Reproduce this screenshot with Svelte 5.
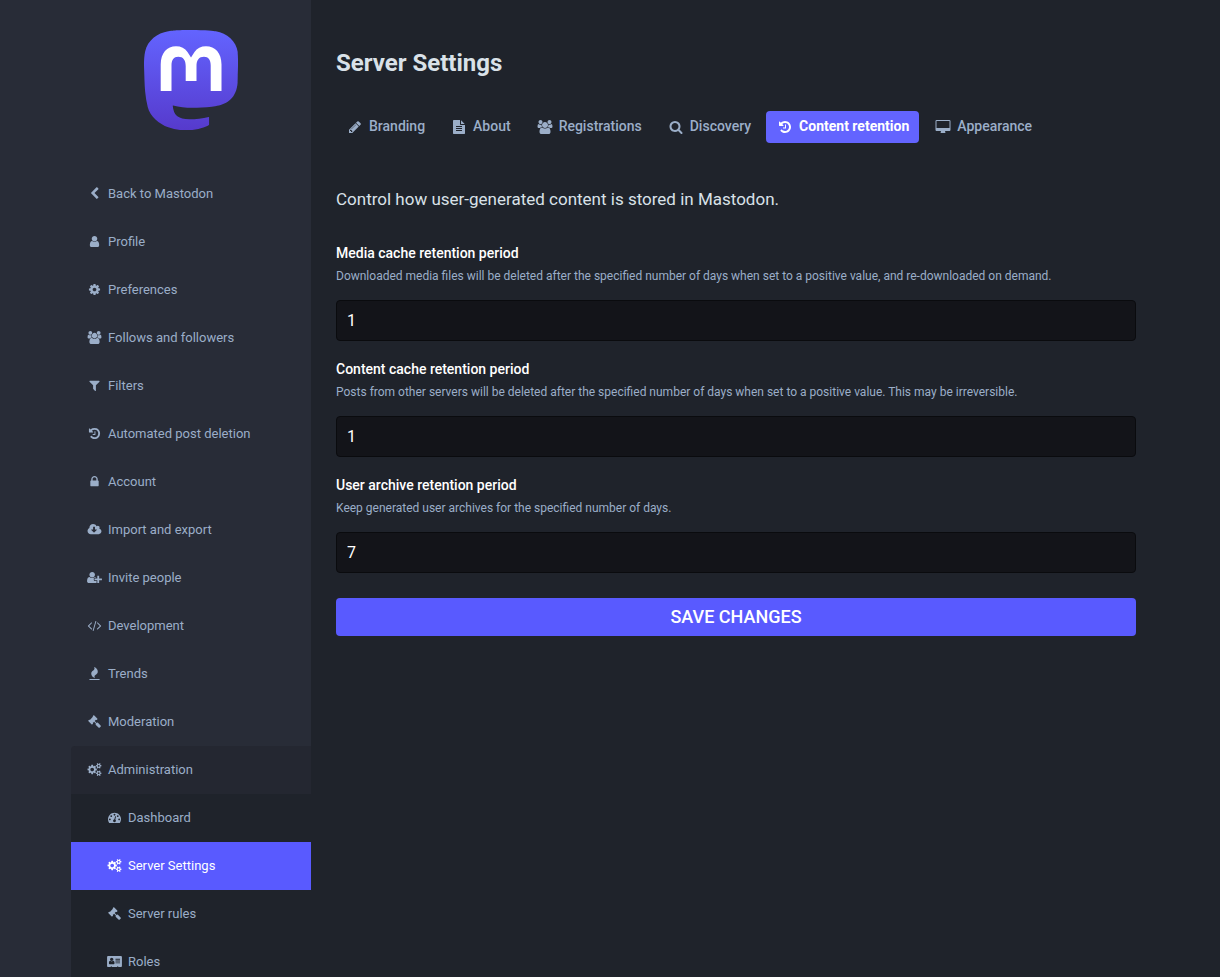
<script>
  const glyphs = {
    back: { box: '0 0 1792 1792', d: 'M1427 301l-531 531 531 531q19 19 19 45t-19 45l-166 166q-19 19-45 19t-45-19l-742-742q-19-19-19-45t19-45l742-742q19-19 45-19t45 19l166 166q19 19 19 45t-19 45z' },
    user: { box: '0 0 1792 1792', d: 'M1536 1399q0 109-62.5 187t-150.5 78h-854q-88 0-150.5-78t-62.5-187q0-85 8.5-160.5t31.5-152 58.5-131 94-89 134.5-34.5q131 128 313 128t313-128q76 0 134.5 34.5t94 89 58.5 131 31.5 152 8.5 160.5zm-256-887q0 159-112.5 271.5t-271.5 112.5-271.5-112.5-112.5-271.5 112.5-271.5 271.5-112.5 271.5 112.5 112.5 271.5z' },
    cog: { box: '0 0 1792 1792', d: 'M1152 896q0-106-75-181t-181-75-181 75-75 181 75 181 181 75 181-75 75-181zm512-109v222q0 12-8 23t-20 13l-185 28q-19 54-39 91 35 50 107 138 10 12 10 25t-9 23q-27 37-99 108t-94 71q-12 0-26-9l-138-108q-44 23-91 38-16 136-29 186-7 28-36 28h-222q-14 0-24.5-8.5t-11.5-21.5l-28-184q-49-16-90-37l-141 107q-10 9-25 9-14 0-25-11-126-114-165-168-7-10-7-23 0-12 8-23 15-21 51-66.5t54-70.5q-27-50-41-99l-183-27q-13-2-21-12.5t-8-23.5v-222q0-12 8-23t19-13l186-28q14-46 39-92-40-57-107-138-10-12-10-24 0-10 9-23 26-36 98.5-107.5t94.5-71.5q13 0 26 10l138 107q44-23 91-38 16-136 29-186 7-28 36-28h222q14 0 24.5 8.5t11.5 21.5l28 184q49 16 90 37l142-107q9-9 24-9 13 0 25 10 129 119 165 170 7 8 7 22 0 12-8 23-15 21-51 66.5t-54 70.5q26 50 41 98l183 28q13 2 21 12.5t8 23.5z' },
    users: { box: '0 0 2048 1792', d: 'M657 896q-162 5-265 128h-134q-82 0-138-40.5t-56-118.5q0-353 124-353 6 0 43.5 21t97.5 42.5 119 21.5q67 0 133-23-5 37-5 66 0 139 81 256zm1071 637q0 120-73 189.5t-194 69.5h-874q-121 0-194-69.5t-73-189.5q0-53 3.5-103.5t14-109 26.5-108.5 43-97.5 62-81 85.5-53.5 111.5-20q10 0 43 21.5t73 48 107 48 135 21.5 135-21.5 107-48 73-48 43-21.5q61 0 111.5 20t85.5 53.5 62 81 43 97.5 26.5 108.5 14 109 3.5 103.5zm-1024-1277q0 106-75 181t-181 75-181-75-75-181 75-181 181-75 181 75 75 181zm704 384q0 159-112.5 271.5t-271.5 112.5-271.5-112.5-112.5-271.5 112.5-271.5 271.5-112.5 271.5 112.5 112.5 271.5zm576 225q0 78-56 118.5t-138 40.5h-134q-103-123-265-128 81-117 81-256 0-29-5-66 66 23 133 23 59 0 119-21.5t97.5-42.5 43.5-21q124 0 124 353zm-128-609q0 106-75 181t-181 75-181-75-75-181 75-181 181-75 181 75 75 181z' },
    filter: { box: '0 0 1792 1792', d: 'M1595 295q17 41-14 70l-493 493v742q0 42-39 59-13 5-25 5-27 0-45-19l-256-256q-19-19-19-45v-486l-493-493q-31-29-14-70 17-39 59-39h1280q42 0 59 39z' },
    history: { box: '0 0 1792 1792', d: 'M1664 896q0 156-61 298t-164 245-245 164-298 61q-172 0-327-72.5t-264-204.5q-7-10-6.5-22.5t8.5-20.5l137-138q10-9 25-9 16 2 23 12 73 95 179 147t225 52q104 0 198.5-40.5t163.5-109.5 109.5-163.5 40.5-198.5-40.5-198.5-109.5-163.5-163.5-109.5-198.5-40.5q-98 0-188 35.5t-160 101.5l137 138q31 30 14 69-17 40-59 40h-448q-26 0-45-19t-19-45v-448q0-42 40-59 39-17 69 14l130 129q107-101 244.5-156.5t284.5-55.5q156 0 298 61t245 164 164 245 61 298zm-640-288v448q0 14-9 23t-23 9h-320q-14 0-23-9t-9-23v-64q0-14 9-23t23-9h224v-352q0-14 9-23t23-9h64q14 0 23 9t9 23z' },
    lock: { box: '0 0 1792 1792', d: 'M640 768h512v-192q0-106-75-181t-181-75-181 75-75 181v192zm832 96v576q0 40-28 68t-68 28h-960q-40 0-68-28t-28-68v-576q0-40 28-68t68-28h32v-192q0-184 132-316t316-132 316 132 132 316v192h32q40 0 68 28t28 68z' },
    cloud: { box: '0 0 2048 1792', d: 'M1344 928q0-14-9-23t-23-9h-224v-352q0-13-9.5-22.5t-22.5-9.5h-192q-13 0-22.5 9.5t-9.5 22.5v352h-224q-13 0-22.5 9.5t-9.5 22.5q0 14 9 23l352 352q9 9 23 9t23-9l351-351q10-12 10-24zm640 224q0 159-112.5 271.5t-271.5 112.5h-1088q-185 0-316.5-131.5t-131.5-316.5q0-130 70-240t188-165q-2-30-2-43 0-212 150-362t362-150q156 0 285.5 87t188.5 231q71-62 166-62 106 0 181 75t75 181q0 76-41 138 130 31 213.5 135.5t83.5 238.5z' },
    invite: { box: '0 0 2048 1792', d: 'M704 896q-159 0-271.5-112.5t-112.5-271.5 112.5-271.5 271.5-112.5 271.5 112.5 112.5 271.5-112.5 271.5-271.5 112.5zm960 128h352q13 0 22.5 9.5t9.5 22.5v192q0 13-9.5 22.5t-22.5 9.5h-352v352q0 13-9.5 22.5t-22.5 9.5h-192q-13 0-22.5-9.5t-9.5-22.5v-352h-352q-13 0-22.5-9.5t-9.5-22.5v-192q0-13 9.5-22.5t22.5-9.5h352v-352q0-13 9.5-22.5t22.5-9.5h192q13 0 22.5 9.5t9.5 22.5v352zm-736 224q0 52 38 90t90 38h256v238q-68 50-171 50h-874q-121 0-194-69t-73-190q0-53 3.5-103.5t14-109 26.5-108.5 43-97.5 62-81 85.5-53.5 111.5-20q19 0 39 17 79 61 154.5 91.5t164.5 30.5 164.5-30.5 154.5-91.5q20-17 39-17 132 0 217 96h-223q-52 0-90 38t-38 90v192z' },
    code: { box: '0 0 2048 1792', d: 'M681 1399l-50 50q-10 10-23 10t-23-10l-466-466q-10-10-10-23t10-23l466-466q10-10 23-10t23 10l50 50q10 10 10 23t-10 23l-393 393 393 393q10 10 10 23t-10 23zm591-1067l-373 1291q-4 13-15.5 19.5t-23.5 2.5l-62-17q-13-4-19.5-15.5t-2.5-24.5l373-1291q4-13 15.5-19.5t23.5-2.5l62 17q13 4 19.5 15.5t2.5 24.5zm657 651l-466 466q-10 10-23 10t-23-10l-50-50q-10-10-10-23t10-23l393-393-393-393q-10-10-10-23t10-23l50-50q10-10 23-10t23 10l466 466q10 10 10 23t-10 23z' },
    fire: { box: '0 0 1792 1792', d: 'M1600 1696v64q0 13-9.5 22.5t-22.5 9.5h-1344q-13 0-22.5-9.5t-9.5-22.5v-64q0-13 9.5-22.5t22.5-9.5h1344q13 0 22.5 9.5t9.5 22.5zm-256-1056q0 78-24.5 144t-64 112.5-87.5 88-96 77.5-87.5 72-64 81.5-24.5 96.5q0 96 67 224l-4-1 1 1q-90-41-160-83t-138.5-100-113.5-122.5-72.5-150.5-27.5-184q0-78 24.5-144t64-112.5 87.5-88 96-77.5 87.5-72 64-81.5 24.5-96.5q0-94-66-224l3 1-1-1q90 41 160 83t138.5 100 113.5 122.5 72.5 150.5 27.5 184z' },
    gavel: { box: '0 0 1792 1792', d: 'M1771 1536q0 53-37 90l-107 108q-39 37-91 37-53 0-90-37l-363-364q-38-36-38-90 0-53 43-96l-256-256-126 126q-14 14-34 14t-34-14q2 2 12.5 12t12.5 13 10 11.5 10 13.5 6 13.5 5.5 16.5 1.5 18q0 38-28 68-3 3-16.5 18t-19 20.5-18.5 16.5-22 15.5-22 9-26 4.5q-40 0-68-28l-408-408q-28-28-28-68 0-13 4.5-26t9-22 15.5-22 16.5-18.5 20.5-19 18-16.5q30-28 68-28 10 0 18 1.5t16.5 5.5 13.5 6 13.5 10 11.5 10 13 12.5 12 12.5q-14-14-14-34t14-34l348-348q14-14 34-14t34 14q-2-2-12.5-12t-12.5-13-10-11.5-10-13.5-6-13.5-5.5-16.5-1.5-18q0-38 28-68 3-3 16.5-18t19-20.5 18.5-16.5 22-15.5 22-9 26-4.5q40 0 68 28l408 408q28 28 28 68 0 13-4.5 26t-9 22-15.5 22-16.5 18.5-20.5 19-18 16.5q-30 28-68 28-10 0-18-1.5t-16.5-5.5-13.5-6-13.5-10-11.5-10-13-12.5-12-12.5q14 14 14 34t-14 34l-126 126 256 256q43-43 96-43 52 0 91 37l363 363q37 39 37 91z' },
    cogs: { box: '-64 0 1920 1792', d: 'M832 896q0-106-75-181t-181-75-181 75-75 181 75 181 181 75 181-75 75-181zm768 512q0-52-38-90t-90-38-90 38-38 90q0 53 37.5 90.5t90.5 37.5 90.5-37.5 37.5-90.5zm0-1024q0-52-38-90t-90-38-90 38-38 90q0 53 37.5 90.5t90.5 37.5 90.5-37.5 37.5-90.5zm-384 421v185q0 10-7 19.5t-16 10.5l-155 24q-11 35-32 76 34 48 90 115 7 11 7 20 0 12-7 19-23 30-82.5 89.5t-78.5 59.5q-11 0-21-7l-115-90q-37 19-77 31-11 108-23 155-7 24-30 24h-186q-11 0-20-7.5t-10-17.5l-23-153q-34-10-75-31l-118 89q-7 7-20 7-11 0-21-8-144-133-144-160 0-9 7-19 10-14 41-53t47-61q-23-44-35-82l-152-24q-10-1-17-9.5t-7-19.5v-185q0-10 7-19.5t16-10.5l155-24q11-35 32-76-34-48-90-115-7-11-7-20 0-12 7-20 22-30 82-89t79-59q11 0 21 7l115 90q34-18 77-32 11-108 23-154 7-24 30-24h186q11 0 20 7.5t10 17.5l23 153q34 10 75 31l118-89q8-7 20-7 11 0 21 8 144 133 144 160 0 8-7 19-12 16-42 54t-45 60q23 48 34 82l152 23q10 2 17 10.5t7 19.5zm640 533v140q0 16-149 31-12 27-30 52 51 113 51 138 0 4-4 7-122 71-124 71-8 0-46-47t-52-68q-20 2-30 2t-30-2q-14 21-52 68t-46 47q-2 0-124-71-4-3-4-7 0-25 51-138-18-25-30-52-149-15-149-31v-140q0-16 149-31 13-29 30-52-51-113-51-138 0-4 4-7 4-2 35-20t59-34 30-16q8 0 46 46.5t52 67.5q20-2 30-2t30 2q51-71 92-112l6-2q4 0 124 70 4 3 4 7 0 25-51 138 17 23 30 52 149 15 149 31zm0-1024v140q0 16-149 31-12 27-30 52 51 113 51 138 0 4-4 7-122 71-124 71-8 0-46-47t-52-68q-20 2-30 2t-30-2q-14 21-52 68t-46 47q-2 0-124-71-4-3-4-7 0-25 51-138-18-25-30-52-149-15-149-31v-140q0-16 149-31 13-29 30-52-51-113-51-138 0-4 4-7 4-2 35-20t59-34 30-16q8 0 46 46.5t52 67.5q20-2 30-2t30 2q51-71 92-112l6-2q4 0 124 70 4 3 4 7 0 25-51 138 17 23 30 52 149 15 149 31z' },
    gauge: { box: '0 0 1792 1792', d: 'M384 1152q0-53-37.5-90.5t-90.5-37.5-90.5 37.5-37.5 90.5 37.5 90.5 90.5 37.5 90.5-37.5 37.5-90.5zm192-448q0-53-37.5-90.5t-90.5-37.5-90.5 37.5-37.5 90.5 37.5 90.5 90.5 37.5 90.5-37.5 37.5-90.5zm428 481l101-382q6-26-7.5-48.5t-38.5-29.5-48 6.5-30 39.5l-101 382q-60 5-107 43.5t-63 98.5q-20 77 20 146t117 89 146-20 89-117q16-60-6-117t-72-91zm660-33q0-53-37.5-90.5t-90.5-37.5-90.5 37.5-37.5 90.5 37.5 90.5 90.5 37.5 90.5-37.5 37.5-90.5zm-640-640q0-53-37.5-90.5t-90.5-37.5-90.5 37.5-37.5 90.5 37.5 90.5 90.5 37.5 90.5-37.5 37.5-90.5zm448 192q0-53-37.5-90.5t-90.5-37.5-90.5 37.5-37.5 90.5 37.5 90.5 90.5 37.5 90.5-37.5 37.5-90.5zm320 448q0 261-141 483-19 29-54 29h-1402q-35 0-54-29-141-221-141-483 0-182 71-348t191-286 286-191 348-71 348 71 286 191 191 286 71 348z' },
    card: { box: '0 0 2048 1792', d: 'M1024 1131q0-64-9-117.5t-29.5-103-60.5-78-97-28.5q-6 4-30 18t-37.5 21.5-35.5 17.5-43 14.5-42 4.5-42-4.5-43-14.5-35.5-17.5-37.5-21.5-30-18q-57 0-97 28.5t-60.5 78-29.5 103-9 117.5 37 106.5 91 42.5h512q54 0 91-42.5t37-106.5zm-157-520q0-94-66.5-160.5t-160.5-66.5-160.5 66.5-66.5 160.5 66.5 160.5 160.5 66.5 160.5-66.5 66.5-160.5zm925 509v-64q0-14-9-23t-23-9h-576q-14 0-23 9t-9 23v64q0 14 9 23t23 9h576q14 0 23-9t9-23zm0-260v-56q0-15-10.5-25.5t-25.5-10.5h-568q-15 0-25.5 10.5t-10.5 25.5v56q0 15 10.5 25.5t25.5 10.5h568q15 0 25.5-10.5t10.5-25.5zm0-252v-64q0-14-9-23t-23-9h-576q-14 0-23 9t-9 23v64q0 14 9 23t23 9h576q14 0 23-9t9-23zm256-320v1216q0 66-47 113t-113 47h-352v-96q0-14-9-23t-23-9h-64q-14 0-23 9t-9 23v96h-768v-96q0-14-9-23t-23-9h-64q-14 0-23 9t-9 23v96h-352q-66 0-113-47t-47-113v-1216q0-66 47-113t113-47h1728q66 0 113 47t47 113z' },
    pencil: { box: '0 0 1792 1792', d: 'M491 1536l91-91-235-235-91 91v107h128v128h107zm523-928q0-22-22-22-10 0-17 7l-542 542q-7 7-7 17 0 22 22 22 10 0 17-7l542-542q7-7 7-17zm-54-192l416 416-832 832h-416v-416zm683 96q0 53-37 90l-166 166-416-416 166-165q36-38 90-38 53 0 91 38l235 234q37 39 37 91z' },
    file: { box: '0 0 1792 1792', d: 'M1596 476q14 14 28 36h-472v-472q22 14 36 28zm-476 164h544v1056q0 40-28 68t-68 28h-1344q-40 0-68-28t-28-68v-1600q0-40 28-68t68-28h800v544q0 40 28 68t68 28zm160 736v-64q0-14-9-23t-23-9h-704q-14 0-23 9t-9 23v64q0 14 9 23t23 9h704q14 0 23-9t9-23zm0-256v-64q0-14-9-23t-23-9h-704q-14 0-23 9t-9 23v64q0 14 9 23t23 9h704q14 0 23-9t9-23zm0-256v-64q0-14-9-23t-23-9h-704q-14 0-23 9t-9 23v64q0 14 9 23t23 9h704q14 0 23-9t9-23z' },
    search: { box: '0 0 1792 1792', d: 'M1216 832q0-185-131.5-316.5t-316.5-131.5-316.5 131.5-131.5 316.5 131.5 316.5 316.5 131.5 316.5-131.5 131.5-316.5zm512 832q0 52-38 90t-90 38q-54 0-90-38l-343-342q-179 124-399 124-143 0-273.5-55.5t-225-150-150-225-55.5-273.5 55.5-273.5 150-225 225-150 273.5-55.5 273.5 55.5 225 150 150 225 55.5 273.5q0 220-124 399l343 343q37 37 37 90z' },
    desktop: { box: '0 0 2048 1792', d: 'M1856 992v-832q0-13-9.5-22.5t-22.5-9.5h-1600q-13 0-22.5 9.5t-9.5 22.5v832q0 13 9.5 22.5t22.5 9.5h1600q13 0 22.5-9.5t9.5-22.5zm128-832v1088q0 66-47 113t-113 47h-544q0 37 16 77.5t32 71 16 43.5q0 26-19 45t-45 19h-512q-26 0-45-19t-19-45q0-14 16-44t32-70 16-78h-544q-66 0-113-47t-47-113v-1088q0-66 47-113t113-47h1600q66 0 113 47t47 113z' }
  };

  const menu = [
    { icon: 'back', text: 'Back to Mastodon' },
    { icon: 'user', text: 'Profile' },
    { icon: 'cog', text: 'Preferences' },
    { icon: 'users', text: 'Follows and followers' },
    { icon: 'filter', text: 'Filters' },
    { icon: 'history', text: 'Automated post deletion' },
    { icon: 'lock', text: 'Account' },
    { icon: 'cloud', text: 'Import and export' },
    { icon: 'invite', text: 'Invite people' },
    { icon: 'code', text: 'Development' },
    { icon: 'fire', text: 'Trends' },
    { icon: 'gavel', text: 'Moderation' },
    {
      icon: 'cogs',
      text: 'Administration',
      children: [
        { icon: 'gauge', text: 'Dashboard' },
        { icon: 'cogs', text: 'Server Settings', current: true },
        { icon: 'gavel', text: 'Server rules' },
        { icon: 'card', text: 'Roles' }
      ]
    }
  ];

  const tabs = [
    { icon: 'pencil', text: 'Branding' },
    { icon: 'file', text: 'About' },
    { icon: 'users', text: 'Registrations' },
    { icon: 'search', text: 'Discovery' },
    { icon: 'history', text: 'Content retention', current: true },
    { icon: 'desktop', text: 'Appearance' }
  ];

  let fields = $state([
    { id: 'media_cache', label: 'Media cache retention period', hint: 'Downloaded media files will be deleted after the specified number of days when set to a positive value, and re-downloaded on demand.', value: '1' },
    { id: 'content_cache', label: 'Content cache retention period', hint: 'Posts from other servers will be deleted after the specified number of days when set to a positive value. This may be irreversible.', value: '1' },
    { id: 'user_archive', label: 'User archive retention period', hint: 'Keep generated user archives for the specified number of days.', value: '7' }
  ]);
</script>

{#snippet icon(name)}
  <svg class="icon" viewBox={glyphs[name].box} aria-hidden="true"><path d={glyphs[name].d} /></svg>
{/snippet}

<div class="admin">
  <div class="sidebar-wrapper">
    <nav class="sidebar">
      <a class="logo" href="#home" aria-label="Mastodon">
        <svg viewBox="0 0 94 100" aria-hidden="true">
          <defs>
            <linearGradient id="logo-fill" x1="0" y1="0" x2="0" y2="1">
              <stop offset="0" stop-color="#6364ff" />
              <stop offset="1" stop-color="#563acc" />
            </linearGradient>
          </defs>
          <path
            transform="scale(1.27)"
            fill="url(#logo-fill)"
            d="M73.84 17.49C72.7 9 65.3 2.31 56.53 1.02 55.05.8 49.44 0 36.46 0h-.1C23.37 0 20.585.8 19.105 1.02 10.58 2.28 2.79 8.29.905 16.88 0 21.1-.1 25.8.07 30.1c.24 6.17.286 12.32.846 18.47.387 4.08 1.063 8.13 2.022 12.11 1.795 7.36 9.064 13.49 16.185 15.99 7.625 2.6 15.825 3.04 23.68 1.25.865-.2 1.72-.435 2.56-.7 1.91-.61 4.15-1.29 5.79-2.48q.075-.06.075-.145v-5.95q-.03-.19-.215-.17c-5.03 1.2-10.19 1.805-15.366 1.795-8.906 0-11.3-4.226-11.987-5.985-.55-1.52-.9-3.107-1.04-4.718q.01-.18.215-.176c4.95 1.194 10.023 1.797 15.115 1.795 1.225 0 2.446 0 3.67-.032 5.12-.144 10.52-.406 15.558-1.39.125-.024.25-.045.358-.078 7.897-1.526 15.412-6.3 16.176-18.395.03-.476.1-4.988.1-5.48.004-1.677.536-11.89-.078-18.164z"
          />
          <path
            fill="#fff"
            d="M16.7 61V34.5C16.7 23 23 16.2 32 16.2c5 0 9 2 11.5 5.8l3.5 5.6 3.5-5.6c2.500-3.800 6.500-5.800 11.500-5.800C71.200 16.200 77.500 23 77.500 34.500V61H66.700V35.500c0-5.600-2.300-8.700-6.700-8.700-5 0-7.500 3.200-7.500 9.400V51H41.700V36.200c0-6.200-2.500-9.400-7.500-9.400-4.400 0-6.700 3.100-6.700 8.700V61z"
          />
        </svg>
      </a>
      <ul class="menu">
        {#each menu as item}
          <li>
            <a class="link" class:open={item.children} href="#{item.icon}">{@render icon(item.icon)}{item.text}</a>
            {#if item.children}
              <ul class="submenu">
                {#each item.children as child}
                  <li>
                    <a class="link" class:current={child.current} href="#{child.icon}">{@render icon(child.icon)}{child.text}</a>
                  </li>
                {/each}
              </ul>
            {/if}
          </li>
        {/each}
      </ul>
    </nav>
  </div>

  <main class="content-wrapper">
    <div class="content">
      <h1>Server Settings</h1>
      <nav class="tabs">
        {#each tabs as tab}
          <a class="tab" class:selected={tab.current} href="#{tab.icon}">{@render icon(tab.icon)}{tab.text}</a>
        {/each}
      </nav>
      <form>
        <p class="lead">Control how user-generated content is stored in Mastodon.</p>
        <div class="fields">
          {#each fields as field}
            <div class="field">
              <label for={field.id}>{field.label}</label>
              <span class="hint" id="{field.id}_hint">{field.hint}</span>
              <input id={field.id} type="text" inputmode="numeric" aria-describedby="{field.id}_hint" bind:value={field.value} />
            </div>
          {/each}
        </div>
        <button type="submit">Save changes</button>
      </form>
    </div>
  </main>
</div>

<style>
  :global(body) {
    margin: 0;
    background: #1f232b;
    font-family: Roboto, sans-serif;
    font-size: 13px;
    line-height: 18px;
    color: #fff;
  }

  .admin {
    display: flex;
    height: 100vh;
  }

  .sidebar-wrapper {
    flex: 1 1 240px;
    display: flex;
    justify-content: flex-end;
    background: #282c37;
    overflow-y: auto;
    scrollbar-width: none;
  }

  .sidebar {
    width: 240px;
  }

  .logo {
    display: block;
    padding: 30px 0 40px;
  }

  .logo svg {
    display: block;
    height: 100px;
    margin: 0 auto;
  }

  ul {
    margin: 0;
    padding: 0;
    list-style: none;
  }

  a {
    color: #9baec8;
    text-decoration: none;
  }

  .icon {
    flex: none;
    width: 17px;
    height: 13px;
    margin-bottom: 1px;
    fill: currentColor;
    overflow: visible;
  }

  .link {
    display: flex;
    align-items: center;
    gap: 5px;
    padding: 15px;
  }

  .open {
    background: #242731;
    border-radius: 4px 0 0 0;
  }

  .submenu {
    background: #1f232b;
  }

  .submenu .link {
    padding-left: 35px;
  }

  .submenu .current {
    background: #595aff;
    color: #fff;
  }

  .content-wrapper {
    flex: 1 1 838px;
    overflow-y: auto;
  }

  .content {
    max-width: 800px;
    padding: 48px 25px;
  }

  h1 {
    margin: 0 0 33px;
    font-size: 24px;
    line-height: 30px;
    font-weight: 700;
    color: #d9e1e8;
  }

  .tabs {
    display: flex;
    flex-wrap: wrap;
    gap: 5px;
    margin-bottom: 45px;
  }

  .tab {
    display: flex;
    align-items: center;
    gap: 5px;
    padding: 6px 10px 8px;
    border-radius: 4px;
    font-size: 14px;
    font-weight: 500;
  }

  .tab .icon {
    width: 18px;
    height: 14px;
    margin: 2px 0 0;
  }

  .selected {
    background: #6364ff;
    color: #fff;
    font-weight: 700;
  }

  .lead {
    margin: 0 0 32px;
    font-size: 17px;
    line-height: 22px;
    color: #d9e1e8;
  }

  .fields {
    display: flex;
    flex-direction: column;
    gap: 17px;
    margin-bottom: 25px;
  }

  .field {
    display: flex;
    flex-direction: column;
  }

  label {
    font-size: 14px;
    line-height: 22px;
    font-weight: 500;
  }

  .hint {
    margin: 3px 0 15px;
    font-size: 12px;
    color: #9baec8;
  }

  input {
    box-sizing: border-box;
    width: 100%;
    padding: 10px;
    border: 1px solid #0a0b0e;
    border-radius: 4px;
    background: #131419;
    color: #fff;
    font-family: inherit;
    font-size: 16px;
    line-height: 19px;
  }

  button {
    display: block;
    width: 100%;
    padding: 8px 10px;
    border: 0;
    border-radius: 4px;
    background: #595aff;
    color: #fff;
    font-family: inherit;
    font-size: 18px;
    line-height: 22px;
    font-weight: 500;
    text-transform: uppercase;
    cursor: pointer;
  }
</style>
